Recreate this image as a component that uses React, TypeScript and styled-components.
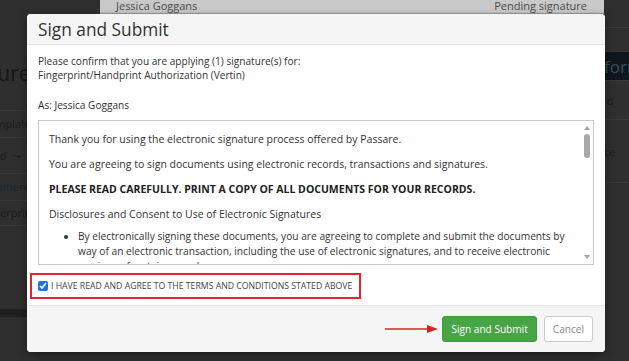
import styled, { createGlobalStyle } from "styled-components";

const GlobalStyle = createGlobalStyle`
  html, body {
    margin: 0;
    padding: 0;
    background: #2f2f2f;
  }
  body {
    font-family: "Open Sans", "Liberation Sans", sans-serif;
  }
`;

const Page = styled.div`
  position: relative;
  width: 629px;
  height: 361px;
  overflow: hidden;
  background: #2f2f2f;
  display: grid;
  grid-template-columns: 100px 504px 25px;
`;

const LeftCol = styled.div`
  display: flex;
  flex-direction: column;
  color: #181818;
  font-size: 11px;
  padding-top: 58px;
`;

const LeftRow = styled.div<{ $h: number; $lh?: number; $shift: number; $size?: number; $fg?: string }>`
  height: ${(p) => p.$h}px;
  line-height: ${(p) => p.$lh || p.$h}px;
  font-size: ${(p) => p.$size || 11}px;
  color: ${(p) => p.$fg || "#1a1a1a"};
  border-bottom: 1px solid #383838;
  white-space: nowrap;
  overflow: hidden;
  text-indent: ${(p) => p.$shift}px;
`;

const LeftBand = styled.div`
  margin-top: auto;
  margin-bottom: 44px;
  height: 8px;
  background: #1f1f1f;
`;

const MidCol = styled.div`
  display: flex;
  flex-direction: column;
`;

const BehindHeader = styled.div`
  height: 13px;
  background: #c9c9c9;
  border-bottom: 1px solid #9a9a9a;
  display: flex;
  justify-content: space-between;
  align-items: flex-end;
  padding: 0 17px 0 16px;
  font-size: 11px;
  line-height: 14px;
  color: #4a4a4a;
  overflow: hidden;
`;

const RightCol = styled.div`
  display: flex;
  flex-direction: column;
  color: #1b1b1b;
  font-size: 11px;
`;

const RightStrip = styled.div<{ $h: number; $bg?: string; $fg?: string; $size?: number }>`
  height: ${(p) => p.$h}px;
  background: ${(p) => p.$bg || "transparent"};
  color: ${(p) => p.$fg || "#1b1b1b"};
  font-size: ${(p) => p.$size || 11}px;
  border-bottom: 1px solid #3a3a3a;
  display: flex;
  align-items: center;
  white-space: nowrap;
  overflow: hidden;
`;

const Modal = styled.div`
  position: absolute;
  left: 27px;
  top: 14px;
  width: 578px;
  height: 338px;
  background: #fff;
  border-radius: 4px;
  box-shadow: 0 3px 8px rgba(0, 0, 0, 0.45);
  display: flex;
  flex-direction: column;
  overflow: hidden;
  color: #333;
`;

const Header = styled.div`
  height: 30px;
  background: #f5f5f5;
  border-bottom: 1px solid #e3e3e3;
  display: flex;
  align-items: center;
  padding: 0 11px;
`;

const Title = styled.h2`
  margin: 0;
  font-weight: 400;
  font-size: 17.3px;
  color: #333;
`;

const Body = styled.div`
  flex: 1;
  padding: 9px 11px 0;
  font-size: 10.1px;
  line-height: 14px;
  display: flex;
  flex-direction: column;
`;

const Para = styled.p<{ $gap?: number }>`
  margin: 0 0 ${(p) => p.$gap ?? 0}px;
`;

const ScrollBox = styled.div`
  height: 145px;
  border: 1px solid #c8c8c8;
  display: flex;
  box-sizing: border-box;
`;

const ScrollContent = styled.div`
  flex: 1;
  overflow: hidden;
  padding: 11px 2px 0 10px;
  font-size: 10.5px;
  line-height: 15px;
  & p {
    margin: 0 0 10px;
  }
  & b {
    font-weight: 700;
    color: #222;
  }
  & ul {
    margin: -3px 0 0;
    padding-left: 29px;
  }
  & li {
    font-size: 10.2px;
  }
`;

const ScrollBar = styled.div`
  width: 12px;
  display: flex;
  flex-direction: column;
  align-items: center;
  padding: 5px 0;
  box-sizing: border-box;
`;

const Arrow = styled.div<{ $down?: boolean }>`
  width: 0;
  height: 0;
  border-left: 3px solid transparent;
  border-right: 3px solid transparent;
  ${(p) =>
    p.$down
      ? "border-top: 4px solid #a3a3a3; margin-top: auto;"
      : "border-bottom: 4px solid #a3a3a3;"}
`;

const Thumb = styled.div`
  width: 6px;
  height: 24px;
  background: #a8a8a8;
  border-radius: 3px;
  margin-top: 4px;
`;

const AgreeRow = styled.label`
  box-sizing: border-box;
  margin: 8px 0 0 -8px;
  align-self: flex-start;
  width: 331px;
  height: 26px;
  border: 2px solid #e1262c;
  display: flex;
  align-items: center;
  gap: 3px;
  padding-left: 6px;
  font-size: 8.7px;
  color: #444;
  text-transform: uppercase;
`;

const Check = styled.input`
  margin: 0;
  width: 10px;
  height: 10px;
  accent-color: #1a73e8;
`;

const Footer = styled.div`
  height: 46px;
  background: #f5f5f5;
  border-top: 1px solid #e5e5e5;
  display: flex;
  align-items: center;
  justify-content: flex-end;
  gap: 7px;
  padding: 0 12px;
`;

const PointArrow = styled.svg`
  margin-right: -4px;
`;

const Button = styled.button<{ $primary?: boolean }>`
  height: 26px;
  padding: 0 8px;
  border-radius: 3px;
  font-family: inherit;
  font-size: 10.1px;
  border: 1px solid ${(p) => (p.$primary ? "#3d9a3d" : "#cccccc")};
  background: ${(p) => (p.$primary ? "#47a447" : "#ffffff")};
  color: ${(p) => (p.$primary ? "#ffffff" : "#8a8a8a")};
`;

export default function App() {
  return (
    <>
      <GlobalStyle />
      <Page>
        <LeftCol>
          <LeftRow $h={52} $lh={30} $shift={-63} $size={21} $fg="#161616">
            Signature
          </LeftRow>
          <LeftRow $h={26} $shift={-17}>
            Template
          </LeftRow>
          <LeftRow $h={35} $shift={-28}>
            Signed &nbsp;⤳
          </LeftRow>
          <LeftRow $h={26} $shift={-24} $fg="#1b252c">
            Document request
          </LeftRow>
          <LeftRow $h={24} $shift={-21}>
            Fingerprint/Handprint
          </LeftRow>
          <LeftBand />
        </LeftCol>
        <MidCol>
          <BehindHeader>
            <span>Jessica Goggans</span>
            <span>Pending signature</span>
          </BehindHeader>
        </MidCol>
        <RightCol>
          <RightStrip $h={27} />
          <RightStrip $h={23} />
          <RightStrip $h={28} $bg="#0e171c" $fg="#3f4c55" $size={17}>
            form
          </RightStrip>
          <RightStrip $h={38}>&nbsp;d</RightStrip>
          <RightStrip $h={62}>ce</RightStrip>
        </RightCol>

        <Modal>
          <Header>
            <Title>Sign and Submit</Title>
          </Header>
          <Body>
            <Para>Please confirm that you are applying (1) signature(s) for:</Para>
            <Para $gap={16}>Fingerprint/Handprint Authorization (Vertin)</Para>
            <Para $gap={8}>As: Jessica Goggans</Para>
            <ScrollBox>
              <ScrollContent>
                <p>Thank you for using the electronic signature process offered by Passare.</p>
                <p>You are agreeing to sign documents using electronic records, transactions and signatures.</p>
                <p>
                  <b>PLEASE READ CAREFULLY. PRINT A COPY OF ALL DOCUMENTS FOR YOUR RECORDS.</b>
                </p>
                <p>Disclosures and Consent to Use of Electronic Signatures</p>
                <ul>
                  <li>
                    By electronically signing these documents, you are agreeing to complete and submit the
                    documents by way of an electronic transaction, including the use of electronic signatures,
                    and to receive electronic versions of certain records.
                  </li>
                </ul>
              </ScrollContent>
              <ScrollBar>
                <Arrow />
                <Thumb />
                <Arrow $down />
              </ScrollBar>
            </ScrollBox>
            <AgreeRow>
              <Check type="checkbox" defaultChecked />
              <span>I have read and agree to the terms and conditions stated above</span>
            </AgreeRow>
          </Body>
          <Footer>
            <PointArrow width="54" height="10" viewBox="0 0 54 10">
              <line x1="0" y1="5" x2="44" y2="5" stroke="#e0201e" strokeWidth="1.5" />
              <polygon points="42,1 53,5 42,9" fill="#e0201e" />
            </PointArrow>
            <Button $primary>Sign and Submit</Button>
            <Button>Cancel</Button>
          </Footer>
        </Modal>
      </Page>
    </>
  );
}
